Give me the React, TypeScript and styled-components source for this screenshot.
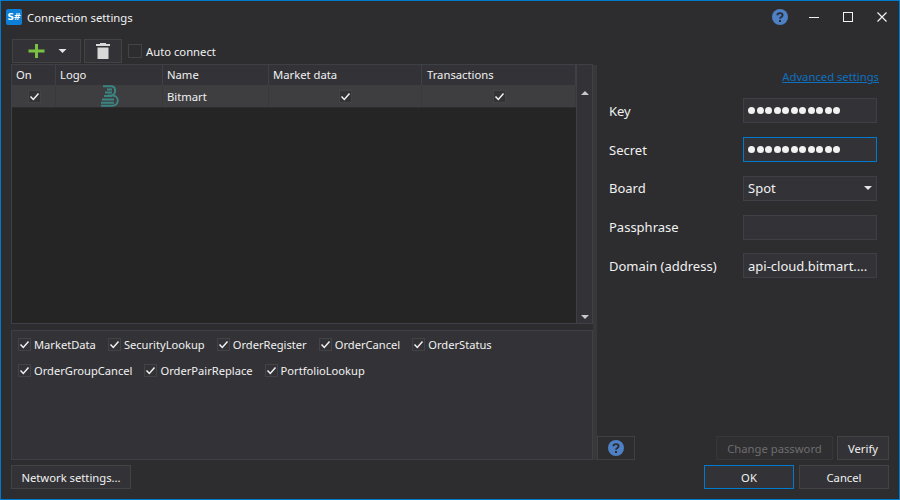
import styled, { createGlobalStyle } from "styled-components";

const GlobalStyle = createGlobalStyle`
  html, body {
    margin: 0;
    padding: 0;
    background: #2d2d30;
  }
`;

const Window = styled("div")`
  width: 900px;
  height: 500px;
  box-sizing: border-box;
  border: 1px solid #007acc;
  background: #2d2d30;
  color: #f1f1f1;
  font-family: "Noto Sans", "Open Sans", sans-serif;
  font-size: 11.25px;
  display: flex;
  flex-direction: column;
  overflow: hidden;
`;

const TitleBar = styled("div")`
  height: 32px;
  flex: none;
  display: flex;
  align-items: center;
  padding-left: 5px;
`;

const AppBadge = styled("div")`
  width: 16px;
  height: 16px;
  margin-right: 5px;
  border-radius: 2px;
  background: #0e7fd6;
  color: #fff;
  font-family: "DejaVu Sans", sans-serif;
  font-size: 9px;
  font-weight: 700;
  line-height: 16px;
  text-align: center;
  letter-spacing: -0.5px;
`;

const Title = styled("span")`
  flex: 1;
  font-size: 11.3px;
`;

const WindowButton = styled("div")`
  width: 34px;
  height: 24px;
  display: flex;
  align-items: center;
  justify-content: center;
`;

const Content = styled("div")`
  flex: 1;
  display: flex;
  min-height: 0;
`;

const LeftPane = styled("div")`
  width: 592px;
  box-sizing: border-box;
  padding-left: 10px;
  display: flex;
  flex-direction: column;
  flex: none;
`;

const Toolbar = styled("div")`
  height: 24px;
  margin: 6px 0 1px 1px;
  display: flex;
  align-items: center;
  gap: 3px;
`;

const ToolButton = styled("div")<{ $width: number }>`
  width: ${(p) => p.$width}px;
  height: 24px;
  box-sizing: border-box;
  border: 1px solid #434346;
  background: #333337;
  display: flex;
  align-items: center;
  justify-content: center;
`;

const AutoConnect = styled("label")`
  margin-left: 3px;
  display: flex;
  align-items: center;
  gap: 4px;
`;

const Grid = styled("div")`
  height: 260px;
  box-sizing: border-box;
  flex: none;
  border: 1px solid #3f3f46;
  display: grid;
  grid-template-columns: 1fr 16px;
  background: #333337;
`;

const GridMain = styled("div")`
  display: flex;
  flex-direction: column;
  min-width: 0;
`;

const GridRow = styled("div")<{ $header?: boolean }>`
  display: grid;
  grid-template-columns: 44px 107px 106px 153px 154px;
  height: ${(p) => (p.$header ? 20 : 23)}px;
  flex: none;
  box-sizing: border-box;
  background: ${(p) => (p.$header ? "#333337" : "#3e3e40")};
  border-bottom: ${(p) => (p.$header ? "none" : "1px solid #2d2d30")};
`;

const HeaderCell = styled("div")`
  box-sizing: border-box;
  padding-left: 4px;
  border-right: 1px solid #3f3f46;
  line-height: 20px;
  color: #f1f1f1;

  &:last-child {
    padding-left: 5px;
  }
`;

const DataCell = styled("div")<{ $center?: boolean }>`
  box-sizing: border-box;
  display: flex;
  align-items: center;
  padding: ${(p) => (p.$center ? "0 0 0 1px" : "1px 0 0 4px")};
  justify-content: ${(p) => (p.$center ? "center" : "flex-start")};
  border-right: 1px solid #39393b;
`;

const GridEmpty = styled("div")`
  flex: 1;
  background: #252526;
`;

const ScrollBar = styled("div")`
  display: flex;
  flex-direction: column;
  align-items: center;
  justify-content: space-between;
  padding: 26px 0 4px;
  background: #333337;
  border-left: 1px solid #3f3f46;
`;

const Arrow = styled("div")<{ $down?: boolean; $color?: string }>`
  width: 0;
  height: 0;
  border-left: 4px solid transparent;
  border-right: 4px solid transparent;
  ${(p) => (p.$down ? "border-top" : "border-bottom")}: 4px solid ${(p) => p.$color ?? "#c8c8c8"};
`;

const CheckBoxBox = styled("span")<{ $plain?: boolean }>`
  width: ${(p) => (p.$plain ? 14 : 13)}px;
  height: ${(p) => (p.$plain ? 14 : 13)}px;
  box-sizing: border-box;
  flex: none;
  display: inline-flex;
  align-items: center;
  justify-content: center;
  background: ${(p) => (p.$plain ? "#2d2d30" : "#333337")};
  border: 1px solid #434346;
`;

const Messages = styled("div")`
  height: 130px;
  margin-top: 6px;
  box-sizing: border-box;
  flex: none;
  border: 1px solid #3f3f46;
  background: #333337;
  padding: 4px 6px;
  display: flex;
  flex-wrap: wrap;
  align-content: flex-start;
  column-gap: 12px;
  row-gap: 8px;
  font-size: 11.15px;
`;

const MessageItem = styled("label")`
  height: 18px;
  display: flex;
  align-items: center;
  gap: 3px;
`;

const Splitter = styled("div")`
  width: 4px;
  flex: none;
  height: 395px;
  margin-top: 32px;
  background: #38383b;
`;

const RightPane = styled("div")`
  flex: 1;
  display: flex;
  flex-direction: column;
  min-width: 0;
`;

const AdvancedLink = styled("a")`
  align-self: flex-end;
  margin: 35px 20px 0 0;
  color: #0e70c0;
  text-decoration: underline;
  line-height: 17px;
`;

const Form = styled("div")`
  margin-top: 13.4px;
  padding: 0 22px 0 12px;
  display: grid;
  grid-template-columns: 134px 134px;
  row-gap: 13.75px;
  align-items: center;
`;

const FieldLabel = styled("div")`
  font-size: 13px;
`;

const Input = styled("div")<{ $focused?: boolean }>`
  height: 25px;
  box-sizing: border-box;
  border: 1px solid ${(p) => (p.$focused ? "#007acc" : "#3f3f46")};
  background: #333337;
  padding: 0 4px;
  display: flex;
  align-items: center;
  justify-content: space-between;
  font-size: 13px;
  white-space: nowrap;
  overflow: hidden;
`;

const Dots = styled("span")`
  display: flex;
  gap: 1.5px;
`;

const Dot = styled("span")`
  width: 7px;
  height: 7px;
  border-radius: 50%;
  background: #f1f1f1;
`;

const Spacer = styled("div")`
  flex: 1;
`;

const PaneFooter = styled("div")`
  display: flex;
  justify-content: space-between;
  padding-right: 10px;
`;

const HelpButton = styled("div")`
  width: 38px;
  height: 24px;
  box-sizing: border-box;
  border: 1px solid #3f3f46;
  display: flex;
  align-items: center;
  justify-content: center;
`;

const FooterActions = styled("div")`
  display: flex;
  gap: 4px;
`;

const Button = styled("div")<{ $width: number; $disabled?: boolean; $primary?: boolean }>`
  width: ${(p) => p.$width}px;
  height: 24px;
  box-sizing: border-box;
  border: 1px solid ${(p) => (p.$primary ? "#007acc" : p.$disabled ? "#373739" : "#434346")};
  background: ${(p) => (p.$disabled ? "#2f2f32" : "#333337")};
  color: ${(p) => (p.$disabled ? "#6d6d6d" : "#f1f1f1")};
  display: flex;
  align-items: center;
  justify-content: center;
`;

const BottomBar = styled("div")`
  height: 39px;
  flex: none;
  box-sizing: border-box;
  display: flex;
  justify-content: space-between;
  padding: 5px 10px 0;
`;

const BottomActions = styled("div")`
  display: flex;
  gap: 5px;
`;

const Check = () => (
  <svg width="11" height="11" viewBox="0 0 11 11">
    <path d="M1.5 5.5 L4.3 8.5 L9.5 2.5" fill="none" stroke="#f1f1f1" strokeWidth="1.5" />
  </svg>
);

const CheckBox = () => (
  <CheckBoxBox>
    <Check />
  </CheckBoxBox>
);

const HelpIcon = () => (
  <svg width="16" height="16" viewBox="0 0 16 16">
    <circle cx="8" cy="8" r="8" fill="#4d80c4" />
    <path d="M5.4 6.2 C5.4 3.4 10.6 3.4 10.6 6.2 C10.6 8 8 7.9 8 9.8" fill="none" stroke="#2d2d30" strokeWidth="1.9" />
    <rect x="7" y="11" width="2" height="2" fill="#2d2d30" />
  </svg>
);

const BitmartLogo = () => (
  <svg width="20" height="22" viewBox="0 0 20 22">
    <path
      d="M3 1.2 H11 C16 1.2 16.500 8 12.500 10 M8 10.500 H13 C19.500 11 19.500 20.800 12 20.800 H1 M7 4.500 H12 M5 7.500 H12 M4 11 H12 M2 14.500 H14 M1 17.800 H14"
      fill="none"
      stroke="#3a8581"
      strokeWidth="1.9"
    />
  </svg>
);

const messages = [
  "MarketData",
  "SecurityLookup",
  "OrderRegister",
  "OrderCancel",
  "OrderStatus",
  "OrderGroupCancel",
  "OrderPairReplace",
  "PortfolioLookup",
];

const PasswordDots = () => (
  <Dots>
    {Array.from({ length: 11 }, (_, i) => (
      <Dot key={i} />
    ))}
  </Dots>
);

const App = () => {
  return (
    <Window>
      <GlobalStyle />
      <TitleBar>
        <AppBadge>S#</AppBadge>
        <Title>Connection settings</Title>
        <WindowButton>
          <HelpIcon />
        </WindowButton>
        <WindowButton>
          <svg width="12" height="12" viewBox="0 0 12 12">
            <rect x="1" y="6" width="10" height="1" fill="#f1f1f1" />
          </svg>
        </WindowButton>
        <WindowButton>
          <svg width="12" height="12" viewBox="0 0 12 12">
            <rect x="1.500" y="1.500" width="9" height="9" fill="none" stroke="#f1f1f1" />
          </svg>
        </WindowButton>
        <WindowButton>
          <svg width="12" height="12" viewBox="0 0 12 12">
            <path d="M1.500 1.500 L10.500 10.500 M10.500 1.500 L1.500 10.500" stroke="#f1f1f1" strokeWidth="1.200" />
          </svg>
        </WindowButton>
      </TitleBar>
      <Content>
        <LeftPane>
          <Toolbar>
            <ToolButton $width={69}>
              <svg width="46" height="18" viewBox="0 0 46 18">
                <path d="M12.500 2 V16 M4.500 9 H20.500" stroke="#7ac143" strokeWidth="3" />
                <path d="M34.500 7 H42.500 L38.500 11 Z" fill="#e6e6e6" />
              </svg>
            </ToolButton>
            <ToolButton $width={38}>
              <svg width="16" height="18" viewBox="0 0 16 18">
                <path d="M5 1 H11 V2 H15 V4 H1 V2 H5 Z M2.500 5.500 H13.500 V17 H2.500 Z" fill="#d8d8d8" />
              </svg>
            </ToolButton>
            <AutoConnect>
              <CheckBoxBox $plain />
              Auto connect
            </AutoConnect>
          </Toolbar>
          <Grid>
            <GridMain>
              <GridRow $header>
                <HeaderCell>On</HeaderCell>
                <HeaderCell>Logo</HeaderCell>
                <HeaderCell>Name</HeaderCell>
                <HeaderCell>Market data</HeaderCell>
                <HeaderCell>Transactions</HeaderCell>
              </GridRow>
              <GridRow>
                <DataCell $center>
                  <CheckBox />
                </DataCell>
                <DataCell $center>
                  <BitmartLogo />
                </DataCell>
                <DataCell>Bitmart</DataCell>
                <DataCell $center>
                  <CheckBox />
                </DataCell>
                <DataCell $center>
                  <CheckBox />
                </DataCell>
              </GridRow>
              <GridEmpty />
            </GridMain>
            <ScrollBar>
              <Arrow />
              <Arrow $down />
            </ScrollBar>
          </Grid>
          <Messages>
            {messages.map((name) => (
              <MessageItem key={name}>
                <CheckBox />
                {name}
              </MessageItem>
            ))}
          </Messages>
        </LeftPane>
        <Splitter />
        <RightPane>
          <AdvancedLink>Advanced settings</AdvancedLink>
          <Form>
            <FieldLabel>Key</FieldLabel>
            <Input>
              <PasswordDots />
            </Input>
            <FieldLabel>Secret</FieldLabel>
            <Input $focused>
              <PasswordDots />
            </Input>
            <FieldLabel>Board</FieldLabel>
            <Input>
              Spot
              <Arrow $down $color="#e6e6e6" />
            </Input>
            <FieldLabel>Passphrase</FieldLabel>
            <Input />
            <FieldLabel>Domain (address)</FieldLabel>
            <Input>api-cloud.bitmart....</Input>
          </Form>
          <Spacer />
          <PaneFooter>
            <HelpButton>
              <HelpIcon />
            </HelpButton>
            <FooterActions>
              <Button $width={117} $disabled>
                Change password
              </Button>
              <Button $width={52}>Verify</Button>
            </FooterActions>
          </PaneFooter>
        </RightPane>
      </Content>
      <BottomBar>
        <Button $width={120}>Network settings...</Button>
        <BottomActions>
          <Button $width={90} $primary>
            OK
          </Button>
          <Button $width={90}>Cancel</Button>
        </BottomActions>
      </BottomBar>
    </Window>
  );
};

export default App;
